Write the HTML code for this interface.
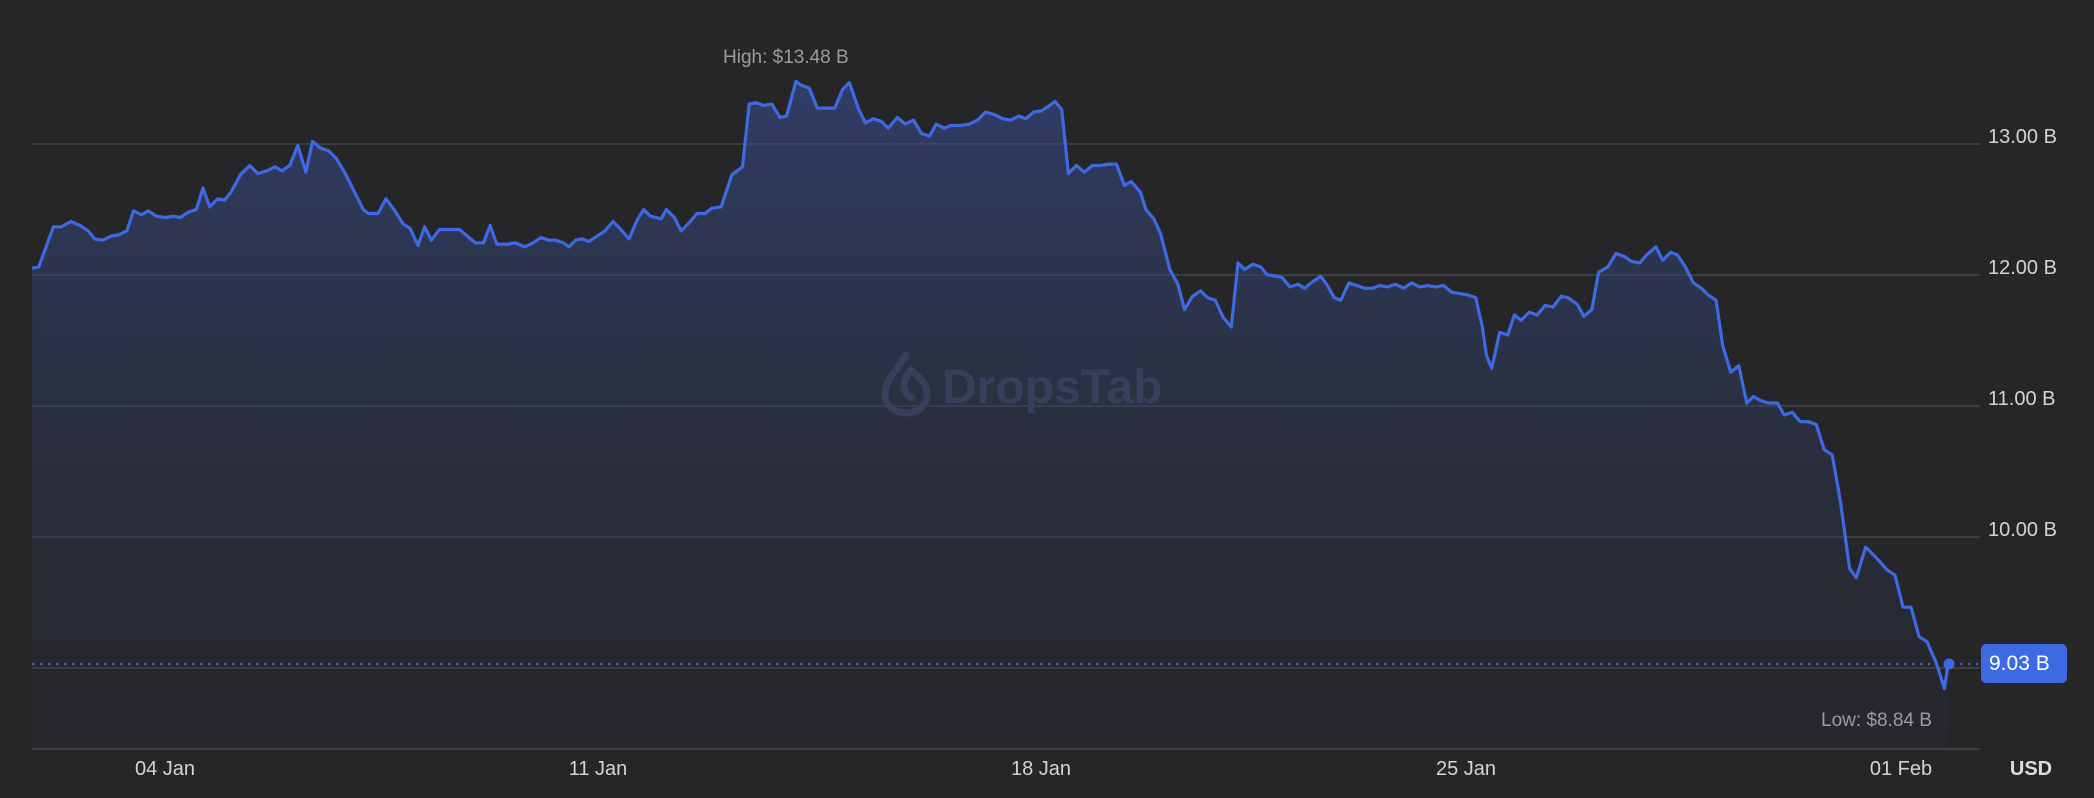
<!DOCTYPE html>
<html><head><style>
html,body{margin:0;padding:0;background:#262628;}
body{width:2094px;height:798px;position:relative;overflow:hidden;font-family:"Liberation Sans",sans-serif;}
.t{position:absolute;white-space:nowrap;color:#d4d4d6;font-size:20px;line-height:1;}
.y{left:1988px;}
.x{top:759px;transform:translateX(-50%);}
.g{color:#9c9c9e;}
</style></head><body>
<svg width="2094" height="798" style="position:absolute;left:0;top:0">
<defs>
<linearGradient id="f" x1="0" y1="0" x2="0" y2="1">
<stop offset="0" stop-color="#3a4f99" stop-opacity="0.55"/>
<stop offset="1" stop-color="#2a2d3a" stop-opacity="0.2"/>
</linearGradient>
</defs>
<g stroke="#3d3d42" stroke-width="2">
<line x1="32" y1="144" x2="1980" y2="144"/>
<line x1="32" y1="275" x2="1980" y2="275"/>
<line x1="32" y1="406" x2="1980" y2="406"/>
<line x1="32" y1="537" x2="1980" y2="537"/>
<line x1="32" y1="668" x2="1980" y2="668"/>
<line x1="32" y1="749" x2="1980" y2="749"/>
</g>
<g transform="scale(1.33546,1.33445)">
<path fill="url(#f)" stroke="none" d="M24,201 L29,200 L40,170 L46,170 L53,166 L60,169 L66,173 L71,179 L77,180 L83,177 L89,176 L95,173 L100,158 L106,161 L111,158 L117,162 L124,163 L130,162 L135,163 L141,159 L147,157 L152,141 L157,155 L163,149 L168,150 L173,144 L180,131 L187,124 L193,130 L200,128 L206,125 L211,128 L217,124 L223,109 L229,129 L234,106 L240,111 L246,113 L252,119 L258,129 L265,143 L272,157 L276,160 L283,160 L289,149 L295,157 L302,168 L307,171 L313,184 L318,170 L323,180 L329,172 L337,172 L344,172 L350,177 L356,182 L362,182 L367,169 L372,183 L380,183 L386,182 L393,185 L399,182 L405,178 L411,180 L416,180 L422,182 L426,185 L431,180 L436,179 L441,181 L447,177 L453,173 L459,166 L465,172 L471,179 L477,165 L482,157 L487,162 L495,164 L499,157 L505,163 L510,173 L516,167 L522,160 L528,160 L533,156 L540,155 L548,131 L556,125 L561,78 L566,77 L572,79 L578,78 L584,88 L589,87 L596,61 L600,64 L606,66 L612,81 L618,81 L625,81 L631,67 L636,62 L643,82 L648,92 L654,89 L660,91 L665,96 L672,88 L678,93 L684,90 L690,100 L696,102 L701,93 L707,96 L712,94 L719,94 L726,93 L732,90 L738,84 L745,86 L751,89 L757,90 L763,87 L768,89 L774,84 L780,83 L786,79 L790,76 L795,82 L800,130 L806,124 L812,129 L818,124 L824,124 L830,123 L836,123 L842,139 L847,136 L854,144 L858,157 L864,164 L869,175 L876,202 L882,213 L887,232 L893,222 L899,218 L904,223 L910,225 L916,238 L922,245 L927,197 L932,202 L938,198 L944,200 L949,206 L956,207 L960,208 L966,215 L972,213 L977,216 L983,211 L989,207 L994,214 L999,223 L1004,225 L1010,212 L1016,214 L1022,216 L1028,216 L1033,214 L1039,215 L1045,213 L1051,216 L1057,212 L1063,215 L1069,214 L1075,215 L1081,214 L1087,219 L1093,220 L1099,221 L1105,223 L1110,245 L1113,266 L1117,276 L1123,249 L1129,251 L1134,236 L1139,240 L1145,234 L1151,236 L1157,229 L1163,230 L1169,222 L1174,223 L1181,228 L1186,237 L1192,232 L1197,204 L1204,200 L1210,190 L1216,192 L1222,196 L1228,197 L1233,191 L1240,185 L1245,195 L1251,189 L1256,191 L1262,200 L1268,212 L1274,216 L1279,221 L1285,225 L1290,259 L1296,279 L1302,274 L1308,302 L1313,297 L1318,300 L1324,302 L1331,302 L1336,311 L1342,309 L1348,316 L1354,316 L1360,318 L1366,337 L1372,341 L1378,375 L1385,426 L1390,433 L1397,410 L1405,418 L1413,427 L1419,431 L1425,455 L1431,455 L1437,477 L1443,481 L1450,497 L1456,516 L1459,496 L1459,561 L24,561 Z"/>
</g>
<g fill="#36405c">
<path d="M906,355 C898,368 885,380 885,394 C885,405 894,413 906,413 C918,413 927,405 927,394 C927,383 918,376 911,370 C906,376 904,381 904,386 C904,392 909,396 912,398" fill="none" stroke="#36405c" stroke-width="7" stroke-linecap="round"/>
<text x="942" y="403" font-family="Liberation Sans, sans-serif" font-weight="bold" font-size="48">DropsTab</text>
</g>
<line x1="32" y1="664" x2="1980" y2="664" stroke="#3d6ae0" stroke-width="2" stroke-dasharray="2,6"/>
<g transform="scale(1.33546,1.33445)">
<polyline fill="none" stroke="#3d6ae3" stroke-width="2.4" stroke-linejoin="round" points="24,201 29,200 40,170 46,170 53,166 60,169 66,173 71,179 77,180 83,177 89,176 95,173 100,158 106,161 111,158 117,162 124,163 130,162 135,163 141,159 147,157 152,141 157,155 163,149 168,150 173,144 180,131 187,124 193,130 200,128 206,125 211,128 217,124 223,109 229,129 234,106 240,111 246,113 252,119 258,129 265,143 272,157 276,160 283,160 289,149 295,157 302,168 307,171 313,184 318,170 323,180 329,172 337,172 344,172 350,177 356,182 362,182 367,169 372,183 380,183 386,182 393,185 399,182 405,178 411,180 416,180 422,182 426,185 431,180 436,179 441,181 447,177 453,173 459,166 465,172 471,179 477,165 482,157 487,162 495,164 499,157 505,163 510,173 516,167 522,160 528,160 533,156 540,155 548,131 556,125 561,78 566,77 572,79 578,78 584,88 589,87 596,61 600,64 606,66 612,81 618,81 625,81 631,67 636,62 643,82 648,92 654,89 660,91 665,96 672,88 678,93 684,90 690,100 696,102 701,93 707,96 712,94 719,94 726,93 732,90 738,84 745,86 751,89 757,90 763,87 768,89 774,84 780,83 786,79 790,76 795,82 800,130 806,124 812,129 818,124 824,124 830,123 836,123 842,139 847,136 854,144 858,157 864,164 869,175 876,202 882,213 887,232 893,222 899,218 904,223 910,225 916,238 922,245 927,197 932,202 938,198 944,200 949,206 956,207 960,208 966,215 972,213 977,216 983,211 989,207 994,214 999,223 1004,225 1010,212 1016,214 1022,216 1028,216 1033,214 1039,215 1045,213 1051,216 1057,212 1063,215 1069,214 1075,215 1081,214 1087,219 1093,220 1099,221 1105,223 1110,245 1113,266 1117,276 1123,249 1129,251 1134,236 1139,240 1145,234 1151,236 1157,229 1163,230 1169,222 1174,223 1181,228 1186,237 1192,232 1197,204 1204,200 1210,190 1216,192 1222,196 1228,197 1233,191 1240,185 1245,195 1251,189 1256,191 1262,200 1268,212 1274,216 1279,221 1285,225 1290,259 1296,279 1302,274 1308,302 1313,297 1318,300 1324,302 1331,302 1336,311 1342,309 1348,316 1354,316 1360,318 1366,337 1372,341 1378,375 1385,426 1390,433 1397,410 1405,418 1413,427 1419,431 1425,455 1431,455 1437,477 1443,481 1450,497 1456,516 1459,496"/>
</g>
<circle cx="1949" cy="664" r="5.5" fill="#3d6ae3"/>
<rect x="1981" y="644" width="86" height="39" rx="5" fill="#3d6ae3"/>
</svg>
<div class="t" style="left:1989px;top:653px;color:#fff;font-size:21px;">9.03 B</div>
<div class="t y" style="top:127px;">13.00 B</div>
<div class="t y" style="top:258px;">12.00 B</div>
<div class="t y" style="top:389px;">11.00 B</div>
<div class="t y" style="top:520px;">10.00 B</div>
<div class="t g" style="left:723px;top:48px;font-size:19px;">High: $13.48 B</div>
<div class="t g" style="left:1821px;top:711px;font-size:19px;">Low: $8.84 B</div>
<div class="t x" style="left:165px;">04 Jan</div>
<div class="t x" style="left:598px;">11 Jan</div>
<div class="t x" style="left:1041px;">18 Jan</div>
<div class="t x" style="left:1466px;">25 Jan</div>
<div class="t x" style="left:1901px;">01 Feb</div>
<div class="t x" style="left:2031px;font-weight:bold;color:#dcdcde;">USD</div>
</body></html>
